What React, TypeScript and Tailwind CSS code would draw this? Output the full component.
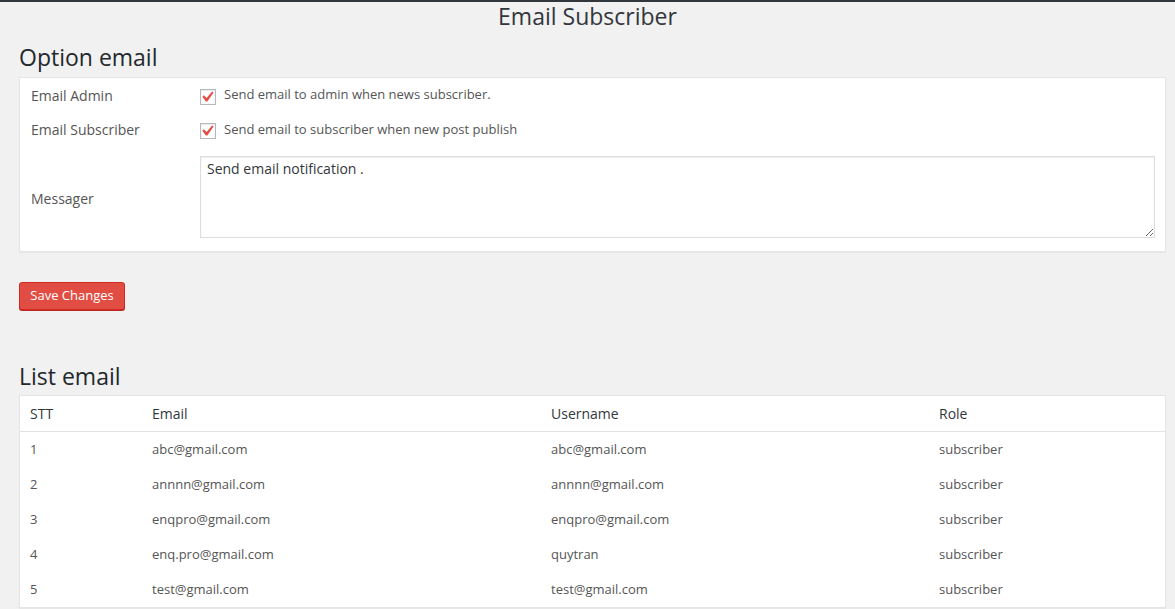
import React from "react";

const rows = [
  { id: 1, email: "abc@gmail.com", username: "abc@gmail.com", role: "subscriber" },
  { id: 2, email: "annnn@gmail.com", username: "annnn@gmail.com", role: "subscriber" },
  { id: 3, email: "enqpro@gmail.com", username: "enqpro@gmail.com", role: "subscriber" },
  { id: 4, email: "enq.pro@gmail.com", username: "quytran", role: "subscriber" },
  { id: 5, email: "test@gmail.com", username: "test@gmail.com", role: "subscriber" },
];

function CheckBox() {
  return (
    <span className="mt-[3px] flex h-4 w-4 shrink-0 items-center justify-center border border-[#b4b9be] bg-white shadow-[inset_0_1px_2px_rgba(0,0,0,0.1)]">
      <svg viewBox="4.5 3.5 13 13" className="h-[14px] w-[14px] shrink-0">
        <path d="M14.83 4.89l1.34.94-5.81 8.38H9.02L5.78 9.67l1.34-1.25 2.57 2.4z" fill="#e14d43" />
      </svg>
    </span>
  );
}

export default function App() {
  return (
    <div className="min-h-[609px] bg-[#f1f1f1] font-['Open_Sans',sans-serif] text-[#555]">
      <div className="h-[2px] bg-[#32373c]" />

      <h1 className="text-center text-[23px] leading-[29px] text-[#32373c]">Email Subscriber</h1>

      <div className="pl-[19px] pr-[9px]">
        {/* Option email */}
        <h2 className="mt-[12px] mb-[5px] text-[23px] leading-[29px] text-[#23282d]">Option email</h2>
        <div className="border border-[#e5e5e5] bg-white pl-[11px] pr-[10px] pb-[13px] shadow-[0_1px_1px_rgba(0,0,0,0.04)]">
          <div className="flex h-[34px] items-center">
            <div className="w-[169px] text-[14px]">Email Admin</div>
            <CheckBox />
            <span className="ml-2 text-[13px] text-[#555]">Send email to admin when news subscriber.</span>
          </div>
          <div className="flex h-[35px] items-center">
            <div className="w-[169px] text-[14px]">Email Subscriber</div>
            <CheckBox />
            <span className="ml-2 text-[13px] text-[#555]">Send email to subscriber when new post publish</span>
          </div>
          <div className="mt-[9px] flex items-center">
            <div className="w-[169px] pt-[3px] text-[14px]">Messager</div>
            <textarea
              defaultValue="Send email notification ."
              className="h-[82px] flex-1 border border-[#ddd] bg-white px-[6px] py-[2px] text-[14px] leading-[20px] text-[#32373c] shadow-[inset_0_1px_2px_rgba(0,0,0,0.07)] outline-none"
            />
          </div>
        </div>

        <button className="mt-[30px] h-[28px] w-[106px] rounded-[3px] border border-[#d02c21] bg-[#e14d43] text-[13px] text-white shadow-[0_1px_0_#ba281e]">
          Save Changes
        </button>

        {/* List email */}
        <h2 className="mt-[52px] mb-[4px] text-[23px] leading-[29px] text-[#23282d]">List email</h2>
        <div className="border border-[#e5e5e5] bg-white shadow-[0_1px_1px_rgba(0,0,0,0.04)]">
          <div className="grid h-[36px] grid-cols-[122px_399px_388px_1fr] items-center border-b border-[#e1e1e1] text-[14px] text-[#32373c]">
            <div className="pl-[10px]">STT</div>
            <div className="pl-[10px]">Email</div>
            <div className="pl-[10px]">Username</div>
            <div className="pl-[10px]">Role</div>
          </div>
          {rows.map((r) => (
            <div key={r.id} className="grid h-[35px] grid-cols-[122px_399px_388px_1fr] items-center text-[13px] text-[#555]">
              <div className="pl-[10px]">{r.id}</div>
              <div className="pl-[10px]">{r.email}</div>
              <div className="pl-[10px]">{r.username}</div>
              <div className="pl-[10px]">{r.role}</div>
            </div>
          ))}
        </div>
      </div>
    </div>
  );
}
